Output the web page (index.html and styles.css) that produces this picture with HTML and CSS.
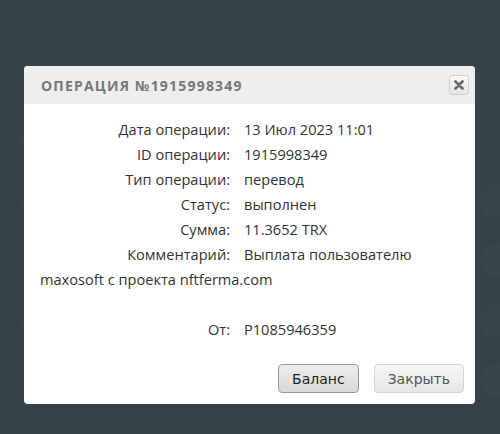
FILE: index.html
```html
<!DOCTYPE html>
<html lang="ru">
<head>
    <meta charset="UTF-8">
    <title>Операция №1915998349</title>
    <link rel="stylesheet" href="styles.css">
</head>
<body>
    <!-- page behind the overlay -->
    <div class="page">
        <div class="page-row"><span class="ghost-text">А</span></div>
        <div class="page-row"><span class="ghost-text">+ 1</span><span class="ghost-dot"></span></div>
        <div class="page-row"><span class="ghost-text"></span><span class="ghost-dot"></span></div>
        <div class="page-row"><span class="ghost-text">+ 2</span><span class="ghost-dot"></span></div>
        <div class="page-row"><span class="ghost-text"></span><span class="ghost-dot"></span></div>
    </div>

    <div class="dialog">
        <div class="dialog-title">
            <span>ОПЕРАЦИЯ №1915998349</span>
            <button class="close-btn" title="Закрыть">
                <svg width="10" height="10" viewBox="0 0 10 10">
                    <path d="M1.5 1.5 L8.5 8.5 M8.5 1.5 L1.5 8.5" stroke="#666" stroke-width="2.6" stroke-linecap="round"/>
                </svg>
            </button>
        </div>
        <div class="dialog-body">
            <div class="line"><span class="label">Дата операции:</span>13 Июл 2023 11:01</div>
            <div class="line"><span class="label">ID операции:</span>1915998349</div>
            <div class="line"><span class="label">Тип операции:</span>перевод</div>
            <div class="line"><span class="label">Статус:</span>выполнен</div>
            <div class="line"><span class="label">Сумма:</span>11.3652 TRX</div>
            <div class="line"><span class="label">Комментарий:</span>Выплата пользователю maxosoft с проекта nftferma.com</div>
            <div class="line">&nbsp;</div>
            <div class="line"><span class="label">От:</span>P1085946359</div>
        </div>
        <div class="dialog-buttons">
            <button class="btn btn-active">Баланс</button>
            <button class="btn">Закрыть</button>
        </div>
    </div>
</body>
</html>
```

FILE: styles.css
```css
/* Page under the modal overlay */
body {
    margin: 0;
    padding: 0;
    background: #37434b;
    font-family: "Open Sans", Arial, sans-serif;
    height: 434px;
    overflow: hidden;
    position: relative;
}

.page {
    padding-top: 128px;
    display: flex;
    flex-direction: column;
    gap: 34px;
}

.page-row {
    display: flex;
    justify-content: space-between;
    align-items: center;
    height: 26px;
    padding: 0 0 0 18px;
}

.ghost-text {
    color: #3b4850;
    font-size: 15px;
    font-weight: bold;
}

.ghost-dot {
    width: 34px;
    height: 34px;
    border-radius: 50%;
    background: #39464e;
    margin-right: -14px;
}

/* Dialog box */
.dialog {
    position: absolute;
    left: 24px;
    top: 66px;
    width: 451px;
    height: 338px;
    background: #fff;
    border-radius: 4px;
    box-sizing: border-box;
    display: flex;
    flex-direction: column;
}

.dialog-title {
    height: 38px;
    background: #eeeeee;
    border-radius: 4px 4px 0 0;
    display: flex;
    align-items: center;
    justify-content: space-between;
    padding: 0 6px 0 17px;
    color: #777;
    font-size: 14px;
    font-weight: bold;
    letter-spacing: 1.2px;
}

.close-btn {
    width: 20px;
    height: 20px;
    padding: 0;
    border: 1px solid #cfcfcf;
    border-radius: 3px;
    background: linear-gradient(#f8f8f8, #e6e6e6);
    display: flex;
    align-items: center;
    justify-content: center;
}

.dialog-body {
    padding: 13px 12px 0 16px;
    color: #333;
    font-size: 14.6px;
    line-height: 25px;
    flex: 1;
}

.label {
    display: inline-block;
    width: 190px;
    margin-right: 14px;
    text-align: right;
}

/* Buttons */
.dialog-buttons {
    display: flex;
    justify-content: flex-end;
    gap: 15px;
    padding: 0 11px 11px 0;
}

.btn {
    height: 29px;
    padding: 0 13px;
    font-family: "DejaVu Sans", Verdana, sans-serif;
    font-size: 14px;
    color: #555;
    border: 1px solid #d3d3d3;
    border-radius: 4px;
    background: linear-gradient(#f6f6f6, #e6e6e6);
}

.btn-active {
    color: #222;
    border-color: #999;
    background: linear-gradient(#ececec, #d9d9d9);
}
```
